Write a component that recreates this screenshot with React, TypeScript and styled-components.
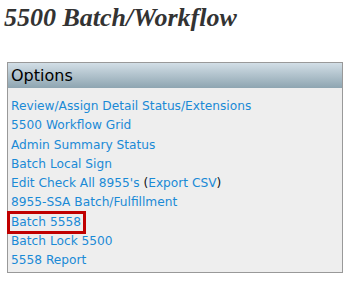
import React from "react";
import styled, { createGlobalStyle } from "styled-components";

const Global = createGlobalStyle`
  html, body { margin: 0; padding: 0; background: #fff; }
  body { font-family: "DejaVu Sans", Verdana, sans-serif; }
`;

const Page = styled.div`
  padding: 3px 9px 0 7px;
`;

const Title = styled.h1`
  margin: 0 0 0 -3px;
  font-family: "Liberation Serif", "Times New Roman", serif;
  font-style: italic;
  font-weight: bold;
  font-size: 26px;
  line-height: 29px;
  color: #333;
`;

const Panel = styled.div`
  margin-top: 30px;
  width: 334px;
  border: 1px solid #999;
  background: #eee;
`;

const Header = styled.div`
  height: 25px;
  padding-left: 3px;
  background: linear-gradient(to bottom, #d2dee6, #8ea5b1);
  font-size: 16px;
  line-height: 25px;
  color: #000;
`;

const List = styled.ul`
  list-style: none;
  margin: 0;
  padding: 9px 3px 1px 3px;
`;

const Item = styled.li`
  font-size: 12.2px;
  line-height: 19.3px;
  color: #111;
`;

const Highlight = styled.span`
  display: inline-block;
  outline: 3px solid #c00000;
  margin-left: -1px;
  padding: 0 2px 0 1px;
  line-height: 17px;
`;

const Link = styled.a`
  color: #1a8ad6;
  text-decoration: none;
`;

const items: { label: React.ReactNode; hl?: boolean }[] = [
  { label: <Link href="#">Review/Assign Detail Status/Extensions</Link> },
  { label: <Link href="#">5500 Workflow Grid</Link> },
  { label: <Link href="#">Admin Summary Status</Link> },
  { label: <Link href="#">Batch Local Sign</Link> },
  {
    label: (
      <>
        <Link href="#">Edit Check All 8955's</Link> (<Link href="#">Export CSV</Link>)
      </>
    ),
  },
  { label: <Link href="#">8955-SSA Batch/Fulfillment</Link> },
  { label: <Link href="#">Batch 5558</Link>, hl: true },
  { label: <Link href="#">Batch Lock 5500</Link> },
  { label: <Link href="#">5558 Report</Link> },
];

export default function App() {
  return (
    <>
      <Global />
      <Page>
        <Title>5500 Batch/Workflow</Title>
        <Panel>
          <Header>Options</Header>
          <List>
            {items.map((it, i) => (
              <Item key={i}>
                {it.hl ? <Highlight>{it.label}</Highlight> : it.label}
              </Item>
            ))}
          </List>
        </Panel>
      </Page>
    </>
  );
}
